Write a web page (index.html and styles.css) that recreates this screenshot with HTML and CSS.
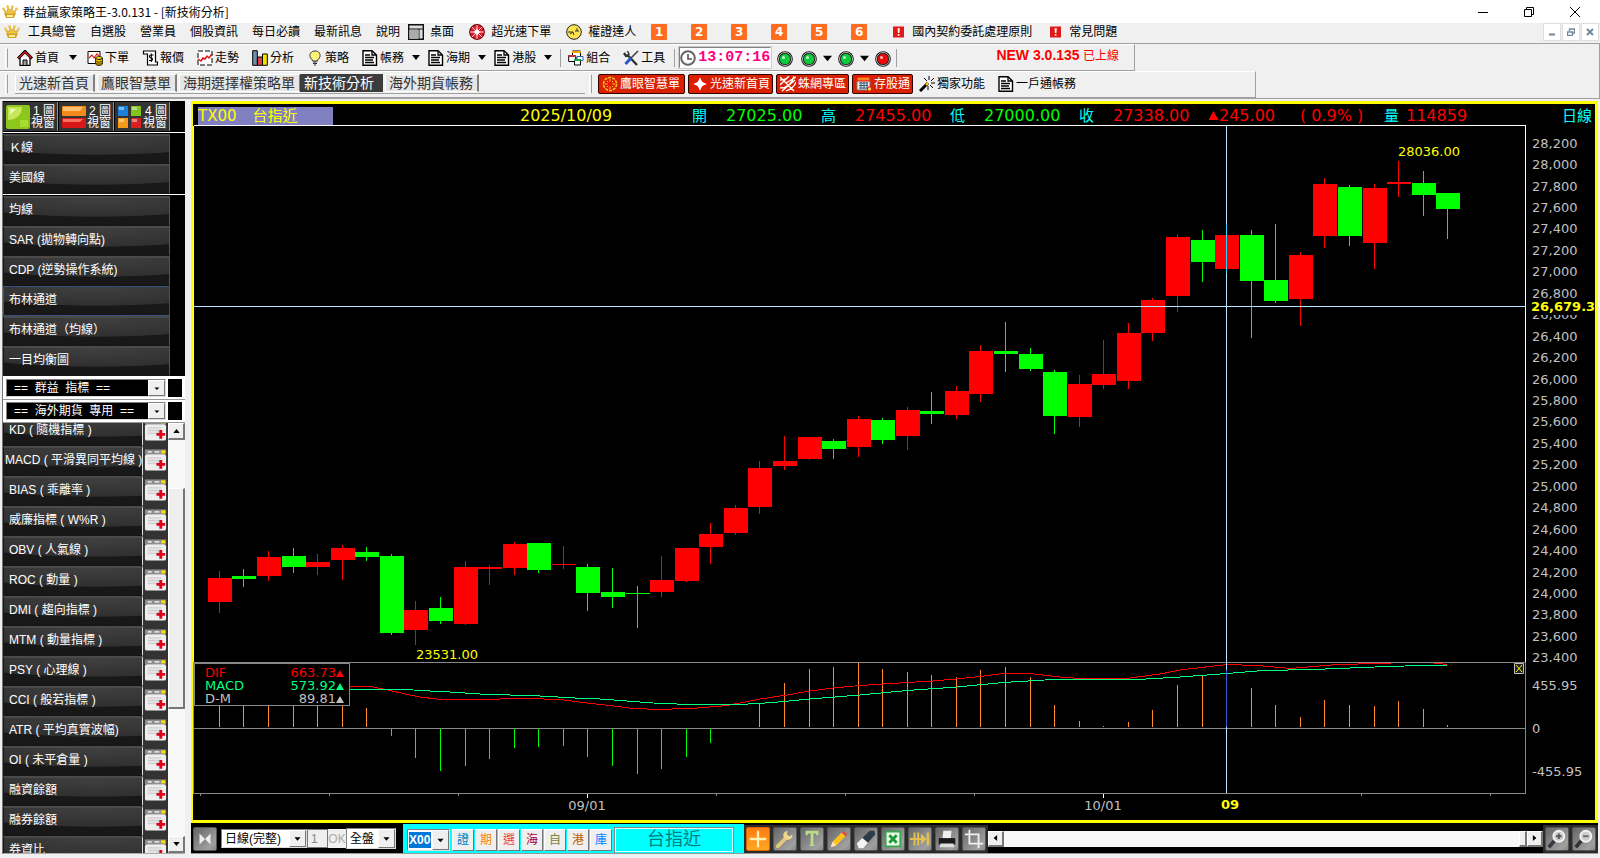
FILE: index.html
```html
<!DOCTYPE html>
<html lang="zh-Hant">
<head>
<meta charset="utf-8">
<title>群益贏家策略王-3.0.131</title>
<link rel="stylesheet" href="styles.css">
</head>
<body>
<svg class="defs" aria-hidden="true">
  <symbol id="crown" viewBox="0 0 16 16"><path d="M2 9h12l-2 5H4z" fill="#d9a520"/><path d="M4 10L1 5l4 3 1-5 2 4 2-4 1 5 4-3-3 5z" fill="#f0c545" stroke="#c9951c" stroke-width=".6"/><circle cx="1.5" cy="5" r="1.4" fill="#eec450"/><circle cx="5.5" cy="2.6" r="1.4" fill="#eec450"/><circle cx="10.5" cy="2.6" r="1.4" fill="#eec450"/><circle cx="14.5" cy="5" r="1.4" fill="#eec450"/><path d="M5 11h6v2H5z" fill="#fff0a0"/></symbol>
  <symbol id="doc" viewBox="0 0 16 16"><path d="M1 .8h9L14.5 5v10.2H1z" fill="#fff" stroke="#000" stroke-width="1.4"/><path d="M10 1v4h4M3 5h5M3 7.5h9M3 10h8M3 12.5h9" fill="none" stroke="#000" stroke-width="1.3"/></symbol>
  <symbol id="down" viewBox="0 0 8 5"><path d="M0 0h8L4 5z"/></symbol>
  <symbol id="led" viewBox="0 0 16 16"><circle cx="8" cy="8" r="7.8" fill="#111"/><circle cx="8" cy="8" r="6.500" fill="none" stroke="#bbb" stroke-width="1"/><circle cx="8" cy="8" r="5.2" fill="currentColor"/><circle cx="6.5" cy="6.5" r="1.5" fill="#fff" opacity=".75"/></symbol>
  <symbol id="alert" viewBox="0 0 12 12"><path d="M0 0h12v12H0z" fill="#e01818"/><path d="M5 2h2.4L7 7H5.4zM5.2 8.2h1.8V10H5.2z" fill="#fff"/></symbol>
  <symbol id="addwin" viewBox="0 0 26 28"><path d="M0 0h26v28H0z" fill="#333"/><path d="M2 2h22v5H2z" fill="#8d8d8d"/><path d="M5 3.500h4v2H5zM12 3.500h5v2h-5z" fill="#ddd"/><path d="M19 3h4v3h-4z" fill="#ffe400"/><rect x="2" y="7" width="22" height="17" rx="2" fill="#eee"/><path d="M5 10h14v8H5z" fill="#d0d0d0"/><path d="M5 12h14M5 15h10M5 18h10" stroke="#f5f5f5"/><path d="M18.500 13v9M14 17.500h9" stroke="#e0001a" stroke-width="3"/></symbol>
</svg>

<header class="titlebar">
  <svg class="i16"><use href="#crown"/></svg>
  <h1>群益贏家策略王-3.0.131 - [新技術分析]</h1>
  <div class="winbtns">
    <button aria-label="最小化"><svg width="10" height="10"><path d="M0 5.500h10" stroke="#000"/></svg></button>
    <button aria-label="還原"><svg width="10" height="10"><path d="M.5 2.500h7v7h-7zM2.500 2.500v-2h7v7h-2" fill="none" stroke="#000"/></svg></button>
    <button aria-label="關閉"><svg width="10" height="10"><path d="M0 0l10 10M10 0L0 10" stroke="#000"/></svg></button>
  </div>
</header>

<nav class="menubar">
  <svg class="i16 crown2"><use href="#crown"/></svg>
  <a href="#">工具總管</a><a href="#">自選股</a><a href="#">營業員</a><a href="#">個股資訊</a><a href="#">每日必讀</a><a href="#">最新訊息</a><a href="#">說明</a>
  <a href="#" class="mi first"><svg class="i16" viewBox="0 0 16 16"><path d="M.7.700h14.600v14.600H.7z" fill="#ddd" stroke="#111" stroke-width="1.400"/><path d="M.7 5h14.600M11 5v10" stroke="#111"/><path d="M1.500 6h9v9h-9z" fill="#aaa"/></svg>桌面</a>
  <a href="#" class="mi"><svg class="i16" viewBox="0 0 16 16"><circle cx="8" cy="8" r="7.300" fill="#e02030" stroke="#700" stroke-width="1.200"/><path d="M8 1v14M1 8h14M3 3l10 10M13 3L3 13" stroke="#fff" stroke-width=".8"/><path d="M8 4l1.200 2.800L12 8 9.200 9.200 8 12 6.800 9.200 4 8l2.800-1.200z" fill="#fff"/></svg>超光速下單</a>
  <a href="#" class="mi"><svg class="i16" viewBox="0 0 16 16"><circle cx="8" cy="8" r="7.300" fill="#ffe34d" stroke="#222" stroke-width="1"/><path d="M2 8h5l1 3M9 7h4M4 10l3-2M11 4v3" fill="none" stroke="#333"/></svg>權證達人</a>
  <div class="nums"><button>1</button><button>2</button><button>3</button><button>4</button><button>5</button><button>6</button></div>
  <a href="#" class="mi note"><svg class="i12"><use href="#alert"/></svg>國內契約委託處理原則</a>
  <a href="#" class="mi note"><svg class="i12"><use href="#alert"/></svg>常見問題</a>
  <div class="mdibtns">
    <button aria-label="縮小"><svg width="8" height="8"><path d="M1 6.500h6" stroke="#7388a0" stroke-width="2"/></svg></button>
    <button aria-label="還原視窗"><svg width="8" height="8"><path d="M.5 4h5v3.500h-5zM2.500 3V1h5v4H6" fill="none" stroke="#7388a0" stroke-width="1.300"/></svg></button>
    <button aria-label="關閉視窗"><svg width="8" height="8"><path d="M1 1l6 6M7 1L1 7" stroke="#7388a0" stroke-width="2"/></svg></button>
  </div>
</nav>

<section class="bars">
  <div class="band band1">
    <i class="grip"></i>
    <button class="tb"><svg class="i16" viewBox="0 0 16 16"><path d="M3 7v8.300h10V7" fill="#fff" stroke="#000" stroke-width="1.300"/><path d="M6 15v-5h4v5" fill="#999" stroke="#000"/><path d="M1 8.500L8 1.500l7 7" fill="none" stroke="#000" stroke-width="3"/><path d="M1.500 8L8 1.800 14.500 8" fill="none" stroke="#e02020" stroke-width="1.300"/></svg>首頁</button>
    <button class="arr wide" aria-label="首頁選單"><svg><use href="#down"/></svg></button>
    <button class="tb"><svg class="i16" viewBox="0 0 16 16"><path d="M1 1.500h12v12H1z" fill="#fff" stroke="#000"/><path d="M2 8l3-3 2 3 3-4 2 2" fill="none" stroke="#e02020" stroke-width="1.200"/><ellipse cx="12" cy="8" rx="3.500" ry="1.500" fill="#ffe000" stroke="#000" stroke-width=".7"/><path d="M8.500 8v6c1 2 6 2 7 0V8c-1 2-6 2-7 0z" fill="#f0c000" stroke="#000" stroke-width=".7"/><path d="M8.500 11c1 1.500 6 1.500 7 0M8.500 13c1 1.500 6 1.500 7 0" fill="none" stroke="#000" stroke-width=".7"/></svg>下單</button>
    <button class="tb"><svg class="i16" viewBox="0 0 16 16"><path d="M3.500 1h10v11h2v3h-10V4h-4V1z" fill="#fff" stroke="#000" stroke-width="1.200"/><path d="M11.500 5h-2.500c-2 0-2 2.800 0 2.800s2 2.700 0 2.700H7M9.300 3.500v8.500" fill="none" stroke="#000" stroke-width="1.100"/></svg>報價</button>
    <button class="tb"><svg class="i16" viewBox="0 0 16 16"><path d="M1 1h14v14H1z" fill="#fff" stroke="#000" stroke-dasharray="5 2"/><path d="M1 9l3 2 2-3 2 1 2-3 2 2 3-4" fill="none" stroke="#e01010" stroke-width="1.400"/></svg>走勢</button>
    <button class="tb"><svg class="i16" viewBox="0 0 16 16"><path d="M.7.700h4.600v14.600H.7z" fill="#6d8fa8" stroke="#000"/><path d="M5.500 7h5v8.300h-5z" fill="#e04040" stroke="#000"/><path d="M10.500 4h4.800v11.300h-4.800z" fill="#f5e400" stroke="#000"/></svg>分析</button>
    <button class="tb"><svg class="i16" viewBox="0 0 16 16"><path d="M8 1C4 1 2.500 4 3 6.500 3.500 9 5.500 9 5.500 11h5c0-2 2-2 2.500-4.500C13.500 4 12 1 8 1z" fill="#fff27a" stroke="#333"/><path d="M6 12h4M6 13.500h4M7 15h2" stroke="#333"/></svg>策略</button>
    <button class="tb"><svg class="i16"><use href="#doc"/></svg>帳務</button>
    <button class="arr" aria-label="帳務選單"><svg><use href="#down"/></svg></button>
    <button class="tb"><svg class="i16"><use href="#doc"/></svg>海期</button>
    <button class="arr" aria-label="海期選單"><svg><use href="#down"/></svg></button>
    <button class="tb"><svg class="i16"><use href="#doc"/></svg>港股</button>
    <button class="arr" aria-label="港股選單"><svg><use href="#down"/></svg></button>
    <i class="sep"></i>
    <button class="tb"><svg class="i16" viewBox="0 0 16 16"><path d="M4.500 1h8v7h-8z" fill="#fff" stroke="#000"/><path d="M4 1h9v2H4z" fill="#f0a000"/><path d="M.7 5.500h7v6h-7z" fill="#fff" stroke="#000"/><path d="M.5 5h7.500v2H.5z" fill="#c03030"/><path d="M9 6.500h6v4H9z" fill="#fff" stroke="#2060c0"/><path d="M6.500 9.500h6v5.500h-6z" fill="#fff" stroke="#000"/><path d="M6 9h7v2H6z" fill="#20a040"/></svg>組合</button>
    <button class="tb"><svg class="i16" viewBox="0 0 16 16"><path d="M1 3l2 3 2-.5L14 15" fill="none" stroke="#333" stroke-width="2.400"/><path d="M4.500 1l1.500 3-2 2" fill="none" stroke="#333" stroke-width="1.500"/><path d="M15 1L8 8" stroke="#444" stroke-width="1.600"/><path d="M8 8l-5.500 6" stroke="#2455c8" stroke-width="3"/></svg>工具</button>
    <i class="sep"></i>
    <time class="clock"><svg class="i16" viewBox="0 0 16 16"><circle cx="8" cy="8" r="6.800" fill="#fff" stroke="#666" stroke-width="2"/><path d="M8 4v5h4" fill="none" stroke="#555" stroke-width="1.600"/></svg>13:07:16</time>
    <div class="leds">
      <svg class="i16 on"><use href="#led"/></svg><svg class="i16 on"><use href="#led"/></svg><svg class="tri"><use href="#down"/></svg><svg class="i16 on"><use href="#led"/></svg><svg class="tri"><use href="#down"/></svg><svg class="i16 off"><use href="#led"/></svg>
    </div>
    <i class="sep"></i>
    <p class="news"><b>NEW 3.0.135</b> 已上線</p>
  </div>
  <div class="band band2">
    <i class="grip"></i>
    <div class="tabs"><button>光速新首頁</button><button>鷹眼智慧單</button><button>海期選擇權策略單</button><button class="active">新技術分析</button><button>海外期貨帳務</button></div>
    <i class="grip"></i>
    <div class="links">
      <button class="red"><svg class="i16" viewBox="0 0 16 16"><circle cx="8" cy="8" r="6.500" fill="none" stroke="#ffc928" stroke-width="1.500" stroke-dasharray="3 1"/><path d="M8 3v10M3 8h10M5 5l6 6M11 5l-6 6" stroke="#ffc928"/><circle cx="8" cy="8" r="2" fill="#d92000"/></svg>鷹眼智慧單</button>
      <button class="red"><svg class="i16" viewBox="0 0 16 16"><path d="M8 0l2.500 5.500L16 8l-5.500 2.500L8 16l-2.500-5.500L0 8l5.500-2.500z" fill="#fff"/></svg>光速新首頁</button>
      <button class="red"><svg class="i16" viewBox="0 0 16 16"><path d="M0 1l6 6L16 1M2 15L15 4M0 9l8-8M6 7l8 8M0 4c5 0 7-1 9-4M0 12c7 0 12-5 14-12M6 15c6-2 9-6 10-9" fill="none" stroke="#fff" stroke-width="1.300"/></svg>蛛網專區</button>
      <button class="red"><svg class="i16" viewBox="0 0 16 16"><path d="M1 2h13v12H1z" fill="#eee" stroke="#777"/><path d="M1 1h13v4H1z" fill="#f08a20"/><path d="M3 7h9M3 9.500h9M3 12h9M5 6v7M8 6v7M11 6v7" stroke="#357"/><circle cx="13.500" cy="13" r="2.200" fill="#ffd633"/></svg>存股通</button>
      <button class="plain"><svg class="i16" viewBox="0 0 16 16"><path d="M1 15l8-8" stroke="#000" stroke-width="3"/><path d="M7 9l2-2" stroke="#fd0" stroke-width="2"/><path d="M10 0v4M12 5l3-3M12 7h4M11 9l3 3M5 2l3 3M9 10v4" stroke="#000"/></svg>獨家功能</button>
      <button class="plain"><svg class="i16"><use href="#doc"/></svg>一戶通帳務</button>
    </div>
  </div>
</section>

<main>
  <aside class="side">
    <div class="views">
      <button><svg viewBox="0 0 24 24"><rect width="24" height="24" rx="2" fill="#8ec71c"/><path d="M2 2h14C16 10 10 15 2 15z" fill="#c4e858"/><path d="M4 4h6L4 10z" fill="#ecf8b0"/><path d="M14 15h8v7h-8z" fill="#a8dc30"/></svg><span>1 圖<br>視窗</span></button>
      <button><svg viewBox="0 0 24 24"><rect y="1" width="24" height="10" rx="1" fill="#f58a1c"/><path d="M1 2h20l-3 4H1z" fill="#ffc070"/><rect y="13" width="24" height="10" rx="1" fill="#d81818"/><path d="M1 14h20l-3 3H1z" fill="#f87060"/></svg><span>2 圖<br>視窗</span></button>
      <button><svg viewBox="0 0 24 24"><path d="M0 1h10v10H0z" fill="#1b80d8"/><path d="M13 1h10v10H13z" fill="#82c41c"/><path d="M0 13h10v10H0z" fill="#f59a1c"/><path d="M13 13h10v10H13z" fill="#d82020"/><path d="M1 2h5v3H1zM14 2h5v3h-5zM1 14h5v3H1zM14 14h5v3h-5z" fill="#fff" opacity=".45"/></svg><span>4 圖<br>視窗</span></button>
    </div>
    <div class="group"><button>Ｋ線</button><button>美國線</button></div>
    <div class="group"><button>均線</button><button>SAR (拋物轉向點)</button><button>CDP (逆勢操作系統)</button><button class="sel">布林通道</button><button>布林通道（均線）</button><button>一目均衡圖</button></div>
    <div class="combo"><label class="pick dark"><select aria-label="群益指標"><option>==&nbsp; 群益&nbsp; 指標&nbsp; ==</option></select><svg viewBox="0 0 17 17"><path d="M6 8h6l-3 3z"/></svg></label><i></i></div>
    <div class="combo"><label class="pick dark"><select aria-label="海外期貨"><option>==&nbsp; 海外期貨&nbsp; 專用&nbsp; ==</option></select><svg viewBox="0 0 17 17"><path d="M6 8h6l-3 3z"/></svg></label><i></i></div>
    <div class="listwrap">
      <ul class="list">
        <li><button>KD ( 隨機指標 )</button><svg><use href="#addwin"/></svg></li>
        <li><button class="long">MACD ( 平滑異同平均線 )</button><svg><use href="#addwin"/></svg></li>
        <li><button>BIAS ( 乖離率 )</button><svg><use href="#addwin"/></svg></li>
        <li><button>威廉指標 ( W%R )</button><svg><use href="#addwin"/></svg></li>
        <li><button>OBV ( 人氣線 )</button><svg><use href="#addwin"/></svg></li>
        <li><button>ROC ( 動量 )</button><svg><use href="#addwin"/></svg></li>
        <li><button>DMI ( 趨向指標 )</button><svg><use href="#addwin"/></svg></li>
        <li><button>MTM ( 動量指標 )</button><svg><use href="#addwin"/></svg></li>
        <li><button>PSY ( 心理線 )</button><svg><use href="#addwin"/></svg></li>
        <li><button>CCI ( 般若指標 )</button><svg><use href="#addwin"/></svg></li>
        <li><button>ATR ( 平均真實波幅)</button><svg><use href="#addwin"/></svg></li>
        <li><button>OI ( 未平倉量 )</button><svg><use href="#addwin"/></svg></li>
        <li><button>融資餘額</button><svg><use href="#addwin"/></svg></li>
        <li><button>融券餘額</button><svg><use href="#addwin"/></svg></li>
        <li><button>券資比</button><svg><use href="#addwin"/></svg></li>
      </ul>
      <div class="vscroll"><button aria-label="向上"><svg class="flip"><use href="#down"/></svg></button><i class="before"></i><i class="thumb"></i><i class="after"></i><button aria-label="向下"><svg><use href="#down"/></svg></button></div>
    </div>
  </aside>

  <section class="work">
    <div class="chart">
      <div class="quote">
        <span class="sym">TX00<b>台指近</b></span><span class="date">2025/10/09</span>
        <span class="k">開</span><span class="g">27025.00</span><span class="k">高</span><span class="r">27455.00</span><span class="k">低</span><span class="g">27000.00</span><span class="k">收</span><span class="r">27338.00</span><span class="r chg"><svg viewBox="0 0 10 9"><path d="M0 9L5 0l5 9z"/></svg>245.00</span><span class="r pct">( 0.9% )</span><span class="k vol">量</span><span class="r">114859</span><span class="k per">日線</span>
      </div>
      <div class="plotrow">
        <svg class="plot" viewBox="193 125 1334 695" preserveAspectRatio="none">
          <path d="M193.500 125.500H1525.500V662M193.500 125.500V662" class="ln white"/>
          <path class="ln red" d="M219.500 571V613M268.500 551V581M317.500 554V575M342.500 545V580M415.500 601V645M465.500 561V625M489.500 565V585M514.500 542V575M563.500 546V569M661.500 556V597M686.500 548V582M710.500 523V564M735.500 505V535M759.500 461V514M784.500 436V470M809.500 437V460M858.500 416V457M907.500 407V450M956.500 386V419M980.500 345V402M1079.500 375V427M1103.500 340V389M1128.500 323V389M1152.500 298V341M1177.500 234V312M1300.500 252V326M1324.500 178V248M1374.500 184V269M1398.500 161V197"/>
          <path class="redf" d="M208 578h24v24h-24zM257 557h24v19h-24zM306 562h24v5h-24zM331 548h24v12h-24zM404 610h24v20h-24zM454 567h24v57h-24zM478 567h24v2h-24zM503 544h24v24h-24zM552 564h24v1h-24zM650 580h24v12h-24zM675 548h24v33h-24zM699 534h24v13h-24zM724 508h24v25h-24zM748 468h24v39h-24zM773 461h24v5h-24zM798 437h24v22h-24zM847 419h24v28h-24zM896 410h24v26h-24zM945 391h24v24h-24zM969 351h24v43h-24zM1068 384h24v33h-24zM1092 374h24v11h-24zM1117 333h24v48h-24zM1141 300h24v33h-24zM1166 237h24v59h-24zM1215 235h24v34h-24zM1289 255h24v44h-24zM1313 184h24v52h-24zM1363 188h24v55h-24zM1387 182h24v2h-24z"/>
          <path class="ln green" d="M243.500 569V587M293.500 548V573M366.500 547V561M391.500 554V635M440.500 597V624M538.500 543V573M587.500 564V611M612.500 568V608M637.500 586V628M833.500 439V459M882.500 418V444M931.500 392V424M1005.500 322V372M1030.500 348V371M1054.500 370V434M1202.500 230V282M1251.500 230V338M1275.500 224V303M1349.500 185V246M1423.500 171V216M1447.500 193V239"/>
          <path class="greenf" d="M232 576h24v3h-24zM282 556h24v11h-24zM355 552h24v5h-24zM380 556h24v77h-24zM429 608h24v13h-24zM527 543h24v27h-24zM576 567h24v26h-24zM601 592h24v5h-24zM626 593h24v1h-24zM822 441h24v8h-24zM871 420h24v20h-24zM920 411h24v3h-24zM994 351h24v3h-24zM1019 354h24v15h-24zM1043 372h24v44h-24zM1191 240h24v22h-24zM1240 235h24v46h-24zM1264 280h24v21h-24zM1338 187h24v49h-24zM1412 183h24v12h-24zM1436 193h24v16h-24z"/>
          <path class="ln orange" d="M219.500 706V727M243.500 706V727M268.500 706V727M293.500 706V727M317.500 706V727M342.500 706V727M366.500 708V727M759.500 703V727M784.500 683V727M809.500 669V727M833.500 667V727M858.500 663V727M882.500 669V727M907.500 672V727M931.500 675V727M956.500 677V727M980.500 670V727M1005.500 667V727M1030.500 677V727M1054.500 705V727M1079.500 721V727M1103.500 726V727M1128.500 722V727M1152.500 710V727M1177.500 685V727M1202.500 676V727M1251.500 688V727M1275.500 705V727M1300.500 717V727M1324.500 700V727M1349.500 705V727M1374.500 706V727M1398.500 701V727M1423.500 709V727M1447.500 725V727"/>
          <path class="ln green" d="M391.500 729V736M415.500 729V758M440.500 729V771M465.500 729V766M489.500 729V759M514.500 729V748M538.500 729V747M563.500 729V746M587.500 729V757M612.500 729V766M637.500 729V774M661.500 729V769M686.500 729V757M710.500 729V743"/>
          <path class="ln red" d="M350 686.500H370L388 690 405 694 420 697 437 699 500 699 528 698.500 560 699.500 587 703 610 705.500 633 708.500 660 709.500 697 708 727 705.500 760 699 787 695 810 691 833 688 860 685.500 907 682.500 933 681 956 679 980 676.500 1003 673.500H1030L1060 677 1080 678.500H1117L1130 678 1160 674 1180 670 1227 664.500 1257 665.500 1290 668.500 1337 664.500 1380 663.500 1413 662H1425L1447 664.500"/>
          <path class="ln mint" d="M350 689.500H405L430 691 450 692 480 694 540 696 575 698 600 699 627 701 660 703.500 693 704.500 740 704.500 773 702.500 810 699 860 695 907 690.500 957 687 1003 682.500 1053 679.500H1137L1180 677 1227 673.500 1263 670.500 1313 669.500 1387 666.500 1423 665.500H1447"/>
          <path class="ln gray" d="M193 662.500H1525M193 728.500H1525M193.500 662V793.500H1525.500V662M200.500 793v3M329.500 793v3M458.500 793v3M716.500 793v3M845.500 793v3M974.500 793v3M1361.500 793v3M1490.500 793v3"/>
          <path class="ln white" d="M587.500 794v4M1103.500 794v4"/>
          <path class="box" d="M194.500 663.500H349.500V705.500H194.500z"/>
          <g class="t13"><text x="205" y="677" fill="#f00">DIF</text><text x="336" y="677" text-anchor="end" fill="#f00">663.73</text><text x="205" y="690" fill="#00ff80">MACD</text><text x="336" y="690" text-anchor="end" fill="#00ff80">573.92</text><text x="205" y="703" fill="silver">D-M</text><text x="336" y="703" text-anchor="end" fill="silver">89.81</text></g>
          <path fill="#f00" d="M336 677l4-7 4 7z"/><path fill="#00ff80" d="M336 690l4-7 4 7z"/><path fill="silver" d="M336 703l4-7 4 7z"/>
          <g class="t13" fill="#ff0"><text x="416" y="659">23531.00</text><text x="1398" y="156">28036.00</text></g>
          <g class="t13" fill="silver" text-anchor="middle"><text x="587" y="810">09/01</text><text x="1103" y="810">10/01</text><text x="1230" y="809" class="bold">09</text></g>
          <path class="ln cross" d="M193 306.500H1525M1226.500 125V793"/><path class="ln" stroke="#30d0ff" d="M1226.500 224V273"/><path class="ln" stroke="#3a5cd8" d="M1226.500 670V727"/>
          <path d="M1514.500 663.500h9v10h-9z" fill="#222" stroke="silver"/><path d="M1516 665l6 7M1522 665l-6 7" stroke="#ff0"/>
        </svg>
        <div class="axis">
          <div class="prices"><div>
            <span>28,200</span><span>28,000</span><span>27,800</span><span>27,600</span><span>27,400</span><span>27,200</span><span>27,000</span><span>26,800</span><span>26,600</span><span>26,400</span><span>26,200</span><span>26,000</span><span>25,800</span><span>25,600</span><span>25,400</span><span>25,200</span><span>25,000</span><span>24,800</span><span>24,600</span><span>24,400</span><span>24,200</span><span>24,000</span><span>23,800</span><span>23,600</span><span>23,400</span>
          </div></div>
          <div class="osc"><span>455.95</span><span>0</span><span>-455.95</span></div>
          <b class="cur">26,679.3</b>
        </div>
      </div>
    </div>

    <div class="tools">
      <button class="ic" aria-label="收合"><svg viewBox="0 0 24 24"><path d="M6 6l6 6-6 6zM18 6l-6 6 6 6z" fill="#eee"/></svg></button>
      <label class="pick period"><select aria-label="週期"><option>日線(完整)</option></select><svg viewBox="0 0 17 17"><path d="M5 7h7l-3.500 4z"/></svg></label>
      <input class="num" value="1" aria-label="數值" disabled>
      <button class="ok" disabled>OK</button>
      <label class="pick sess"><select aria-label="盤別"><option>全盤</option></select><svg viewBox="0 0 17 17"><path d="M5 7h7l-3.500 4z"/></svg></label>
      <div class="cyan">
        <label class="pick code"><select aria-label="商品代碼"><option>X00</option></select><svg viewBox="0 0 17 17"><path d="M5 7h7l-3.500 4z"/></svg></label>
        <div class="mk"><button class="c1">證</button><button class="c2">期</button><button class="c3">選</button><button class="c4">海</button><button class="c5">自</button><button class="c6">港</button><button class="c7">庫</button></div>
        <input class="name" value="台指近" aria-label="商品名稱">
      </div>
      <div class="ics">
        <button class="ic hot" aria-label="十字線"><svg viewBox="0 0 24 24"><path d="M12 3v18M3 12h18" stroke="#fff0b0" stroke-width="2.500"/></svg></button>
        <button class="ic" aria-label="設定"><svg viewBox="0 0 24 24"><path d="M4 20l9-9" stroke="#e0c878" stroke-width="4" stroke-linecap="round"/><path d="M20 7a5 5 0 1 1-5-4l-1 4 3 2z" fill="#ecd890"/></svg></button>
        <button class="ic" aria-label="文字"><svg viewBox="0 0 24 24"><path d="M5 3h14v5h-2l-1-2h-2.500v12l2 1.500h-7l2-1.500V6H8L7 8H5z" fill="#b8dc88"/></svg></button>
        <button class="ic" aria-label="畫筆"><svg viewBox="0 0 24 24"><path d="M3 21l2-6L15 5l4 4L9 19z" fill="#ffc21c"/><path d="M3 21l2-6 4 4z" fill="#f8e4c0"/><path d="M15 5l2-2 4 4-2 2z" fill="#e04848"/></svg></button>
        <button class="ic" aria-label="橡皮擦"><svg viewBox="0 0 24 24"><path d="M8 11l8-8h5l1 4-8 9z" fill="#2d3b46"/><path d="M2 17l6-6 6 5-5 6H4z" fill="#f4f4f4"/></svg></button>
        <button class="ic" aria-label="匯出"><svg viewBox="0 0 24 24"><path d="M4 4h16v16H4z" fill="#e9f7e4" stroke="#36a84c" stroke-width="2"/><path d="M8 8l8 8M16 8l-8 8" stroke="#159a3a" stroke-width="3"/></svg></button>
        <button class="ic" aria-label="移至最後"><svg viewBox="0 0 24 24"><path d="M1 12h12M6 5v14M10 5v14" stroke="#e4c050" stroke-width="2"/><path d="M13 6l6 6-6 6z" fill="#e4c050"/><path d="M20.500 5v14" stroke="#e4c050" stroke-width="2.500"/></svg></button>
        <button class="ic" aria-label="列印"><svg viewBox="0 0 24 24"><path d="M8 3h9l-1 9H7z" fill="#eee"/><path d="M3 11h18v7H3z" fill="#1a1a1a"/><path d="M5 17h14l1 4H4z" fill="#ddd"/></svg></button>
        <button class="ic" aria-label="裁切"><svg viewBox="0 0 24 24"><path d="M7 2v15h15M2 7h15v15" fill="none" stroke="#f0f0f0" stroke-width="2"/></svg></button>
      </div>
      <div class="hscroll"><button aria-label="向左"><svg class="lf"><use href="#down"/></svg></button><i class="track"></i><i class="hthumb"></i><button aria-label="向右"><svg class="rt"><use href="#down"/></svg></button></div>
      <div class="ics zoom">
        <button class="ic" aria-label="放大"><svg viewBox="0 0 24 24"><path d="M3 21l6-7" stroke="#333c44" stroke-width="4"/><circle cx="14" cy="9" r="6" fill="#ccc" stroke="#f2f2f2" stroke-width="2"/><path d="M14 6v6M11 9h6" stroke="#555" stroke-width="2"/></svg></button>
        <button class="ic" aria-label="縮小圖"><svg viewBox="0 0 24 24"><path d="M3 21l6-7" stroke="#333" stroke-width="4"/><circle cx="14" cy="9" r="6" fill="#ccc" stroke="#f2f2f2" stroke-width="2"/><path d="M11 9h6" stroke="#667" stroke-width="2"/></svg></button>
      </div>
    </div>
  </section>
</main>
</body>
</html>
```
FILE: styles.css
```css
* { box-sizing: border-box; }
body { margin: 0; height: 100vh; overflow: hidden; display: flex; flex-direction: column; background: #f0f0f0; color: #000; font: 12px/16px "Liberation Sans", "Noto Sans CJK TC", sans-serif; white-space: nowrap; }
button, select, input { font: inherit; color: inherit; margin: 0; padding: 0; border: 0; border-radius: 0; background: none; white-space: nowrap; }
svg { flex: none; display: block; }
.defs { display: none; }
i { display: block; flex: none; }
a { color: inherit; text-decoration: none; }
.i16 { width: 16px; height: 16px; }
.i12 { width: 11px; height: 12px; }

.titlebar { flex: none; height: 23px; background: #fff; display: flex; align-items: center; padding-left: 2px; gap: 5px; }
.titlebar h1 { margin: 0; font: 12px/16px "Noto Sans CJK TC", sans-serif; }
.winbtns { margin-left: auto; display: flex; padding-right: 2px; }
.winbtns button { width: 46px; height: 20px; display: grid; place-items: center; }

.menubar { flex: none; height: 20px; display: flex; align-items: center; gap: 14px; padding: 0 0 2px 4px; }
.crown2 { margin-right: -6px; }
.mi { display: flex; align-items: center; gap: 6px; }
.mi.first { margin-left: -6px; }
.mi + .mi { margin-left: 1px; }
.nums { display: flex; gap: 24px; margin-left: 1px; }
.nums button { width: 16px; height: 16px; background: #ff6c1f; color: #fff; font: bold 12px/16px "DejaVu Sans", sans-serif; border-radius: 1px; }
.mi.note { gap: 8px; margin-left: 4px; }
.nums + .note { margin-left: 12px; }
.mdibtns { margin-left: auto; display: flex; gap: 1px; padding-right: 1px; }
.mdibtns button { width: 18px; height: 18px; background: #fff; border: 1px solid #ddd; display: grid; place-items: center; }

.bars { flex: none; height: 56px; border: 1px solid #a0a0a0; border-width: 1px 1px 1px 0; display: flex; flex-direction: column; align-items: flex-start; }
.band { height: 27px; border: 1px solid #a0a0a0; border-top-color: #fff; border-left: 0; display: flex; align-items: center; }
.band1 { width: 1135px; max-width: 100%; }
.band2 { width: 1256px; max-width: 100%; padding-bottom: 2px; }
.grip { width: 3px; height: 20px; border: 1px solid #fff; border-right-color: #a0a0a0; margin: 0 9px 0 5px; }
.sep { width: 1px; height: 18px; background: #a0a0a0; }
.tb { display: flex; align-items: center; gap: 2px; }
.tb + .tb { margin-left: 13px; }
.arr { width: 24px; display: grid; place-items: center; }
.arr.wide { width: 28px; }
.arr svg { width: 8px; height: 5px; }
.band1 .arr + .sep { margin: 0 7px 0 0; }
.tb + .sep { margin: 0 4px 0 9px; }
.clock { display: flex; align-items: center; gap: 2px; width: 92px; height: 21px; border: 1px solid #fff; border-top-color: #808080; border-left-color: #808080; outline: 1px solid #ccc; background: #fff; color: #ff0080; font: bold 15px/18px "Liberation Mono", monospace; }
.leds { display: flex; align-items: center; gap: 6px; margin: 2px 5px 0 6px; }
.leds .i16:first-child { margin-right: 2px; }
.tri { width: 9px; height: 9px; }
.on { color: #0ccc3c; }
.off { color: #f00808; }
.news { margin: 0 15px 5px auto; color: #f00; }
.news b { font-size: 14px; }
.tabs { display: flex; width: 570px; align-items: center; gap: 2px; height: 20px; border-bottom: 1px solid #a0a0a0; }
.band2 .grip { margin-right: 7px; }
.band2 .tabs + .grip { margin: 0 6px 0 4px; }
.tabs button { height: 18px; padding: 0 4px 0 3px; border: 1px solid #fff; border-right: 2px solid #808080; font-size: 14px; line-height: 16px; color: #333; background: #e6e6e6; }
.tabs .active { background: #3c3c3c; color: #fff; border-color: #3c3c3c; padding-right: 7px; margin-left: -3px; }
.links { display: flex; align-items: center; gap: 3px; }
.links button { display: flex; align-items: center; gap: 2px; height: 20px; }
.links .red { background: #d92000; color: #fff; border: 1px solid #300; border-radius: 2px; padding: 0 4px 0 3px; }
.links .red + .red { padding-right: 2px; }
.links .plain { margin-left: 3px; }
.links .plain + .plain { margin-left: 10px; }

main { flex: 1; min-height: 0; display: flex; gap: 6px; padding: 2px 2px 4px 2px; }
.side { flex: none; width: 183px; background: #000; color: #fff; border-left: 1px solid #777; display: flex; flex-direction: column; min-height: 0; }
.views { flex: none; display: flex; gap: 1px; height: 32px; background: #000; padding-top: 1px; border-bottom: 1px solid #fff; }
.views button { width: 55px; height: 29px; display: flex; align-items: center; gap: 1px; padding-left: 3px; background: #333; border-right: 1px solid #a08878; line-height: 12px; text-align: right; }
.views svg { width: 24px; height: 24px; }
.group { flex: none; padding-top: 1px; border-bottom: 1px solid #fff; }
.group button, .list button { display: block; width: 167px; height: 30px; text-align: left; padding: 0 0 3px 5px; border: 1px solid #151515; border-top: 2px solid #4a4a4a; background: radial-gradient(ellipse 150px 19px at 92px 0, #404040 0, #303030 96%, #181818 100%); }
.group button { border-right: 1px solid #555; }
.group .sel { border: 1px solid #34507c; }
.combo { flex: none; height: 23px; padding: 2px 3px 2px 3px; display: flex; gap: 2px; background: #fff; border-bottom: 1px solid #999; }
.combo i { width: 14px; background: #000; }
.pick { position: relative; display: block; background: #fff; border: 1px solid #808080; border-right-color: #ddd; border-bottom-color: #ddd; color: #000; }
.pick select { appearance: none; width: 100%; height: 100%; display: block; padding-left: 3px; outline: 0; }
.pick svg { position: absolute; right: 0; top: 0; width: 17px; height: 100%; background: #efefef; border: 1px solid #fff; border-right-color: #777; border-bottom-color: #777; }
.pick.dark { width: 160px; }
.dark select { background: #000; color: #fff; padding: 0 0 2px 7px; }
.listwrap { flex: 1; min-height: 0; display: flex; overflow: hidden; border-bottom: 1px solid #aaa; }
.list { list-style: none; margin: -7px 0 0; padding: 0; width: 165px; }
.list li { display: flex; height: 30px; background: #333; }
.list button { width: 140px; border-right: 1px solid #ddd; }
.list .long { padding-left: 1px; }
.list svg { width: 25px; height: 30px; }
.vscroll { width: 17px; display: flex; flex-direction: column; background: #f8f8f8; }
.vscroll button, .hscroll button, .thumb, .hthumb { background: #efefef; border: 1px solid #fff; border-right: 2px solid #777; border-bottom: 2px solid #777; }
.vscroll button, .hscroll button { flex: none; width: 17px; height: 17px; display: grid; place-items: center; color: #000; }
.vscroll svg, .hscroll svg { width: 7px; height: 4px; }
.flip { transform: rotate(180deg); }
.lf { transform: rotate(90deg); }
.rt { transform: rotate(-90deg); }
.before { flex: 49; }
.thumb { flex: 220; }
.after { flex: 129; }

.work { flex: 1; min-width: 0; display: flex; flex-direction: column; background: #000; border-bottom: 1px solid #999; }
.chart { flex: 1; min-height: 0; display: flex; flex-direction: column; border: 3px solid #ff0; border-left-width: 2px; }
.quote { flex: none; height: 21px; display: flex; align-items: center; padding: 2px 3px 0 5px; font: 16px/18px "DejaVu Sans", "Noto Sans CJK TC", sans-serif; }
.sym { width: 135px; background: #8080c0; color: #ff0; font-size: 15px; }
.sym b { font-weight: normal; margin-left: 16px; }
.date { color: #ff0; width: 172px; margin-left: 187px; }
.k { color: #0ff; width: 34px; font-size: 15px; }
.r, .g { width: 95px; }
.r { color: #f00; }
.g { color: #0f0; }
.chg { width: 92px; display: flex; align-items: center; }
.chg svg { width: 11px; height: 9px; fill: #f00; }
.pct { width: 84px; }
.k.vol { width: 22px; }
.k.per { width: auto; margin-left: auto; }
.plotrow { flex: 1; min-height: 0; display: flex; }
.plot { flex: 1; min-width: 0; width: 0; height: 100%; }
.ln { fill: none; stroke-width: 1; shape-rendering: crispEdges; }
.white { stroke: #fff; }
.red { stroke: #f00; }
.redf { fill: #f00; shape-rendering: crispEdges; }
.green { stroke: #0f0; }
.greenf { fill: #0f0; shape-rendering: crispEdges; }
.orange { stroke: #ff8c28; }
.mint { stroke: #00ff80; }
.gray { stroke: #888; }
.cross { stroke: #b4e4ff; }
.box { fill: #000; stroke: #888; shape-rendering: crispEdges; }
.t13 { font: 13px "DejaVu Sans", sans-serif; }
.bold { font-weight: bold; fill: #ff0; }
.axis { flex: none; width: 68px; position: relative; overflow: hidden; color: #c0c0c0; font: 13px/16px "DejaVu Sans", sans-serif; display: grid; grid-template-rows: minmax(0, 537fr) minmax(0, 158fr); padding-left: 5px; }
.prices { overflow: hidden; padding-top: 8px; }
.prices div { height: 536px; display: grid; grid-template-rows: repeat(25, 1fr); align-items: center; }
.osc { display: grid; grid-template-rows: repeat(3, 1fr); align-items: center; padding: 2px 0 27px; }
.cur { position: absolute; left: 4px; top: 25%; background: #000; color: #ff0; line-height: 16px; }

.tools { flex: none; height: 30px; display: flex; align-items: center; padding-top: 1px; }
.ic { width: 24px; height: 24px; padding: 0; border: 1px solid #555; border-radius: 2px; background: linear-gradient(135deg, #666, #a0a0a0 80%, #888); }
.ic svg { width: 22px; height: 22px; }
.ic.hot { background: linear-gradient(#ff7a10, #ffa820); border-color: #e06000; }
.tools > .ic { margin: 0 4px 0 2px; }
.period { width: 86px; height: 19px; }
.num { width: 21px; height: 19px; background: #efefef; color: #888; border: 1px solid #777; padding-left: 3px; }
.ok { width: 18px; height: 19px; background: #efefef; color: #aaa; }
.sess { width: 50px; height: 21px; }
.tools select { font-size: 12px; }
.cyan { margin-left: 7px; height: 29px; display: flex; align-items: center; gap: 2px; background: #0ff; padding: 2px 10px 0 4px; }
.code { width: 43px; height: 22px; }
.code select { background: linear-gradient(#0078d7, #0078d7) 1px 2px / 22px 16px no-repeat; color: #fff; font-weight: bold; padding-left: 1px; }
.mk { display: flex; gap: 1px; }
.mk button { width: 22px; height: 22px; background: #efefef; border: 1px solid #fff; border-right-color: #777; border-bottom-color: #777; font-size: 12px; }
.c1 { color: #0080c0; }
.c2 { color: #ff8000; }
.c3 { color: #f04040; }
.c4 { color: #a00040; }
.c5 { color: #808040; }
.c6 { color: #c06000; }
.c7 { color: #0080ff; }
.cyan .name { width: 120px; height: 26px; border: 1px solid #888; border-bottom: 0; outline: 1px solid #dff; outline-offset: -2px; color: #008080; text-align: center; font-size: 18px; line-height: 18px; padding-bottom: 7px; }
.ics { display: flex; gap: 3px; padding: 2px; background: #2b2b2b; }
.hscroll { flex: 1; min-width: 0; display: flex; height: 16px; }
.hscroll button { height: 16px; width: 16px; }
.track { flex: 1; background: #f8f8f8; }
.hthumb { width: 8px; }
```
